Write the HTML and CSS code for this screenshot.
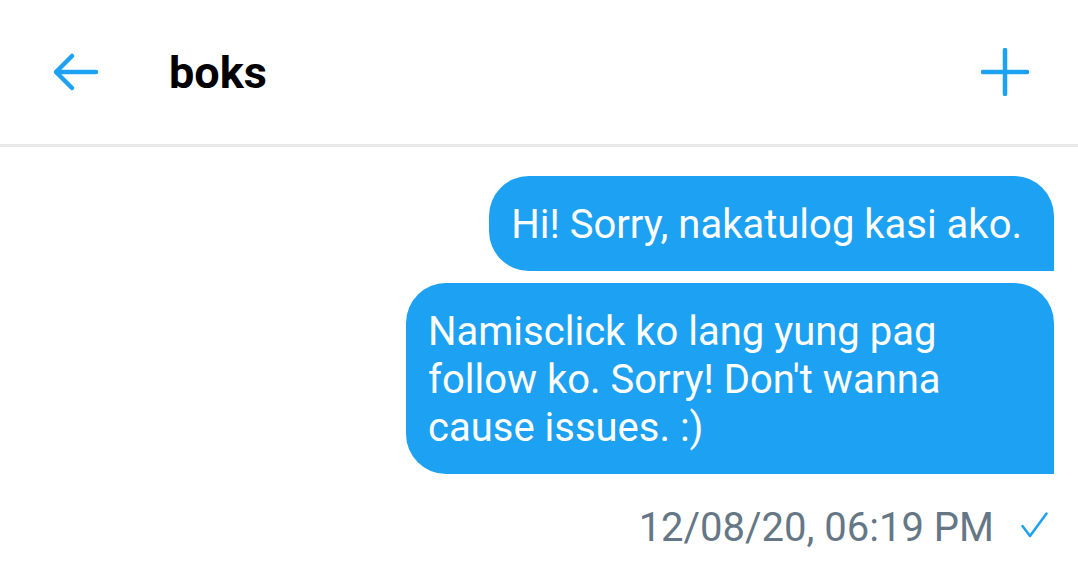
FILE: index.html
```html
<!DOCTYPE html>
<html>
<head>
<meta charset="utf-8">
<link rel="stylesheet" href="styles.css">
</head>
<body>
<header class="topbar">
  <button class="icon-btn back" aria-label="Back">
    <svg width="48" height="40" viewBox="0 0 48 40"><path d="M45 20H5M21 4L5 20l16 16" fill="none" stroke="#1da1f2" stroke-width="4.5" stroke-linecap="round" stroke-linejoin="round"/></svg>
  </button>
  <h1 class="title">boks</h1>
  <button class="icon-btn add" aria-label="Add">
    <svg width="48" height="48" viewBox="0 0 48 48"><path d="M24 2v44M2 24h44" fill="none" stroke="#1da1f2" stroke-width="4.5" stroke-linecap="round"/></svg>
  </button>
</header>
<main class="thread">
  <div class="bubble">Hi! Sorry, nakatulog kasi ako.</div>
  <div class="bubble">Namisclick ko lang yung pag follow ko. Sorry! Don't wanna cause issues. :)</div>
  <div class="meta">
    <span class="time">12/08/20, 06:19 PM</span>
    <svg class="check" width="27" height="26" viewBox="0 0 27 26"><path d="M1.5 14L9 24 25.5 1.5" fill="none" stroke="#1da1f2" stroke-width="2.5" stroke-linecap="round" stroke-linejoin="round"/></svg>
  </div>
</main>
</body>
</html>
```
FILE: styles.css
```css
html, body {
  margin: 0;
  padding: 0;
  background: #ffffff;
  font-family: Roboto, "Noto Sans", sans-serif;
}
.topbar {
  height: 144px;
  border-bottom: 3px solid #e8e8e8;
  display: flex;
  align-items: center;
  padding: 0 49px 0 51px;
  box-sizing: content-box;
}
.icon-btn {
  background: none;
  border: 0;
  padding: 0;
  display: flex;
  align-items: center;
}
.title {
  margin: 0 0 0 70px;
  font-size: 45px;
  font-weight: 700;
  color: #000;
  flex: 1;
}
.thread {
  display: flex;
  flex-direction: column;
  align-items: flex-end;
  padding: 29px 24px 0 0;
  gap: 12px;
}
.bubble {
  background: #1da1f2;
  color: #fff;
  font-size: 40px;
  line-height: 48px;
  padding: 25px 32px 22px 22px;
  border-radius: 40px 40px 0 40px;
  max-width: 594px;
}
.meta {
  display: flex;
  align-items: flex-start;
  gap: 27px;
  padding-right: 6px;
  margin-top: 18px;
}
.time {
  color: #657786;
  font-size: 40px;
  line-height: 48px;
}
.check {
  margin-top: 8px;
}
```
